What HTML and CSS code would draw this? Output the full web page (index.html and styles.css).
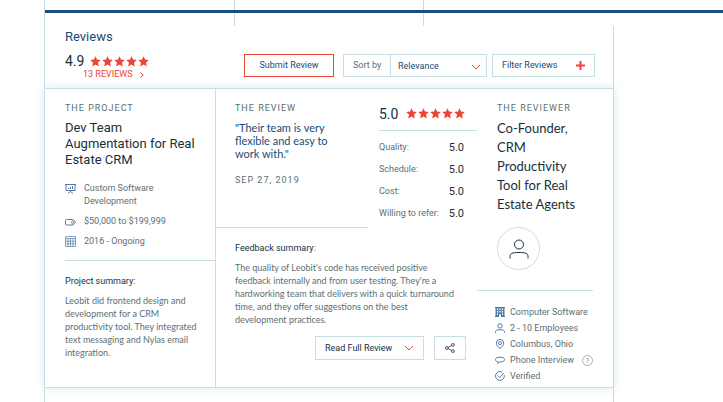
FILE: index.html
```html
<!DOCTYPE html>
<html lang="en">
<head>
  <meta charset="UTF-8" />
  <meta name="viewport" content="width=device-width, initial-scale=1.0" />
  <title>Reviews</title>
  <link rel="stylesheet" href="styles.css">
</head>
<body>
  <svg class="sprite" aria-hidden="true">
    <symbol id="star" viewBox="0 0 11 11">
      <path d="M5.5 0.3 L7 3.6 L10.8 4 L8 6.6 L8.8 10.5 L5.5 8.5 L2.2 10.5 L3 6.6 L0.2 4 L4 3.6 Z" />
    </symbol>
    <symbol id="chevron" viewBox="0 0 10 6">
      <path d="M1 1 L5 5 L9 1" />
    </symbol>
    <symbol id="person" viewBox="0 0 20 20">
      <circle cx="10" cy="5.5" r="4.5" />
      <path d="M1 19.5 V17.5 C1 14.5 3 13.5 10 13.5 S19 14.5 19 17.5 V19.5" />
    </symbol>
  </svg>

  <div class="tabs">
    <div class="tab"></div>
    <div class="tab"></div>
    <div class="tab"></div>
  </div>

  <main class="reviews">
    <header class="reviews-header">
      <div class="summary">
        <h2>Reviews</h2>
        <div class="rating">
          <span class="score">4.9</span>
          <span class="stars">
            <svg><use href="#star" /></svg><svg><use href="#star" /></svg><svg><use href="#star" /></svg><svg><use href="#star" /></svg><svg><use href="#star" /></svg>
          </span>
        </div>
        <a class="review-count" href="#reviews">13 REVIEWS
          <svg viewBox="0 0 4 6"><path d="M0.5 0.5 L3.2 3 L0.5 5.5" /></svg>
        </a>
      </div>
      <div class="controls">
        <button type="button" class="button submit">Submit Review</button>
        <div class="sort">
          <label for="sort">Sort by</label>
          <div class="select">
            <select id="sort">
              <option>Relevance</option>
              <option>Newest</option>
            </select>
            <svg class="chevron"><use href="#chevron" /></svg>
          </div>
        </div>
        <button type="button" class="button filter">Filter Reviews
          <svg viewBox="0 0 9 9"><path d="M4.5 0 V9 M0 4.5 H9" /></svg>
        </button>
      </div>
    </header>

    <article class="card" id="reviews">
      <section class="project">
        <h3 class="eyebrow">THE PROJECT</h3>
        <p class="project-title">Dev Team Augmentation for Real Estate CRM</p>
        <ul class="project-facts">
          <li>
            <svg class="icon" viewBox="0 0 11 11">
              <path d="M0 1.5 H11 M1 1.5 V7.5 H10 V1.5 M3.5 6 V5 M5.5 6 V4 M7.5 6 V3 M5.5 7.5 V9 M3 10.5 L5.5 8.5 L8 10.5" />
            </svg>
            Custom Software Development
          </li>
          <li>
            <svg class="icon" viewBox="0 0 11 11">
              <path d="M7.5 3.5 H1.5 Q0.5 3.5 0.5 4.5 V8 Q0.5 9 1.5 9 H8 L10.5 6.3 L8 3.5 Z" />
              <path d="M7.5 5 L9 6.3 L7.5 7.5 L6.2 6.3 Z" />
            </svg>
            $50,000 to $199,999
          </li>
          <li>
            <svg class="icon thin" viewBox="0 0 11 11">
              <path d="M0.5 0.5 H10.5 V10.5 H0.5 Z M0.5 2.5 H10.5 M0.5 5.2 H10.5 M0.5 7.8 H10.5 M3 2.5 V10.5 M5.5 2.5 V10.5 M8 2.5 V10.5" />
            </svg>
            2016 - Ongoing
          </li>
        </ul>
        <div class="project-summary">
          <h4>Project summary:</h4>
          <p>Leobit did frontend design and development for a CRM productivity tool. They integrated text messaging and Nylas email integration.</p>
        </div>
      </section>

      <section class="review">
        <div class="review-top">
          <div class="quote">
            <h3 class="eyebrow">THE REVIEW</h3>
            <blockquote>"Their team is very flexible and easy to work with."</blockquote>
            <time class="eyebrow date" datetime="2019-09-27">SEP 27, 2019</time>
          </div>
          <div class="scores">
            <div class="rating">
              <span class="score">5.0</span>
              <span class="stars">
                <svg><use href="#star" /></svg><svg><use href="#star" /></svg><svg><use href="#star" /></svg><svg><use href="#star" /></svg><svg><use href="#star" /></svg>
              </span>
            </div>
            <dl>
              <div><dt>Quality:</dt><dd>5.0</dd></div>
              <div><dt>Schedule:</dt><dd>5.0</dd></div>
              <div><dt>Cost:</dt><dd>5.0</dd></div>
              <div><dt>Willing to refer:</dt><dd>5.0</dd></div>
            </dl>
          </div>
        </div>
        <div class="feedback">
          <h4>Feedback summary:</h4>
          <p>The quality of Leobit's code has received positive feedback internally and from user testing. They're a hardworking team that delivers with a quick turnaround time, and they offer suggestions on the best development practices.</p>
          <div class="actions">
            <button type="button" class="button read">Read Full Review
              <svg class="chevron"><use href="#chevron" /></svg>
            </button>
            <button type="button" class="button share" aria-label="Share">
              <svg viewBox="0 0 10 10">
                <circle cx="1.9" cy="5" r="1.4" />
                <circle cx="7.9" cy="1.9" r="1.4" />
                <circle cx="7.9" cy="8.1" r="1.4" />
                <path d="M3.1 4.4 L6.7 2.5 M3.1 5.6 L6.7 7.5" />
              </svg>
            </button>
          </div>
        </div>
      </section>

      <section class="reviewer">
        <h3 class="eyebrow">THE REVIEWER</h3>
        <p class="reviewer-title">Co-Founder, CRM Productivity Tool for Real Estate Agents</p>
        <div class="avatar"><svg><use href="#person" /></svg></div>
        <ul class="reviewer-facts">
          <li>
            <svg class="icon" viewBox="0 0 10 10">
              <path class="solid" fill-rule="evenodd" d="M0 0 H10 V1 H9.5 V9 H10 V10 H6 V7.5 H4 V10 H0 V9 H0.5 V1 H0 Z M2 1.6 V3 H3.3 V1.6 Z M4.4 1.6 V3 H5.6 V1.6 Z M6.7 1.6 V3 H8 V1.6 Z M2 4 V5.4 H3.3 V4 Z M4.4 4 V5.4 H5.6 V4 Z M6.7 4 V5.4 H8 V4 Z M2 6.4 V8 H3 V6.4 Z M7 6.4 V8 H8 V6.4 Z" />
            </svg>
            Computer Software
          </li>
          <li>
            <svg class="icon" viewBox="0 0 10 10">
              <circle cx="5" cy="2.9" r="2.2" />
              <path d="M0.5 9.8 V8.6 C0.5 7.3 2 6.8 5 6.8 S9.5 7.3 9.5 8.6 V9.8" />
            </svg>
            2 - 10 Employees
          </li>
          <li>
            <svg class="icon" viewBox="0 0 10 10">
              <path d="M5 9.5 C2.6 7.6 1.3 6 1.3 4.1 A3.7 3.7 0 0 1 8.7 4.1 C8.7 6 7.4 7.6 5 9.5 Z" />
              <circle cx="5" cy="4.2" r="1.5" />
            </svg>
            Columbus, Ohio
          </li>
          <li>
            <svg class="icon" viewBox="0 0 10 10">
              <path d="M4.5 7 L2.8 8.5 V6.8 C1.2 6.5 0.5 5.7 0.5 4.6 C0.5 3 2 2.2 5 2.2 S9.5 3 9.5 4.6 S8 7 4.5 7 Z" />
            </svg>
            Phone Interview
            <button type="button" class="help">?</button>
          </li>
          <li>
            <svg class="icon" viewBox="0 0 10 10">
              <path d="M9.2 4 A4.4 4.4 0 1 1 7 1.1 M3 4.8 L4.7 6.5 L9 1.8" />
            </svg>
            Verified
          </li>
        </ul>
      </section>
    </article>
  </main>
</body>
</html>
```

FILE: styles.css
```css
* {
  box-sizing: border-box;
}

body {
  margin: 0;
  min-height: 100vh;
  display: flex;
  flex-direction: column;
  font-family: Roboto, Arial, sans-serif;
  font-size: 9px;
  line-height: 13px;
  color: #5c6f73;
  background-color: #ffffff;
}

h2, h3, h4, p, ul, dl, dd, blockquote {
  margin: 0;
  padding: 0;
  font-weight: 400;
}

ul {
  list-style: none;
}

svg {
  display: block;
  flex: none;
  fill: none;
}

button, select {
  font: inherit;
  cursor: pointer;
}

.sprite {
  position: absolute;
  width: 0;
  height: 0;
}

/* tab strip above the panel */
.tabs {
  position: relative;
  display: grid;
  grid-template-columns: repeat(3, 1fr);
  height: 26px;
  padding: 0 110px 0 44px;
}

.tab {
  border-left: 1px solid #c5dfe4;
}

.tabs::after {
  content: "";
  position: absolute;
  top: 10px;
  left: 45px;
  right: 0;
  height: 3px;
  background-color: #184f7c;
}

.reviews {
  flex: 1;
  margin: 0 109px 0 44px;
  border: solid #c5dfe4;
  border-width: 0 1px;
}

.reviews-header {
  display: flex;
  justify-content: space-between;
  align-items: flex-end;
  padding: 2px 18px 0 20px;
  height: 62px;
}

.summary {
  padding-bottom: 8px;
}

h2 {
  font-size: 13px;
  line-height: 16px;
  margin-bottom: 8px;
  color: #1b4a76;
}

.rating {
  display: flex;
  align-items: center;
  gap: 6px;
}

.score {
  font-size: 14px;
  line-height: 16px;
  color: #17313b;
}

.stars {
  display: flex;
  gap: 1px;
}

.stars svg {
  width: 11px;
  height: 11px;
  fill: #ef4335;
}

.review-count {
  display: flex;
  align-items: center;
  gap: 7px;
  margin-left: 18px;
  line-height: 11px;
  color: #ef4335;
  text-decoration: none;
}

.review-count svg {
  width: 4px;
  height: 6px;
  stroke: #ef4335;
}

.controls {
  display: flex;
  padding-bottom: 11px;
}

.button {
  display: flex;
  align-items: center;
  justify-content: center;
  height: 23px;
  padding: 0 9px;
  border: 1px solid #c5dfe4;
  background: none;
  color: #1b4a76;
}

.submit {
  width: 90px;
  margin-right: 9px;
  border-color: #ef4335;
}

.sort {
  display: flex;
  align-items: center;
  width: 144px;
  height: 23px;
  margin-right: 5px;
  border: 1px solid #c5dfe4;
}

.sort label {
  width: 46px;
  padding-left: 9px;
}

.select {
  position: relative;
  flex: 1;
  height: 100%;
  border-left: 1px solid #c5dfe4;
}

.select select {
  appearance: none;
  width: 100%;
  height: 100%;
  padding: 2px 20px 0 7px;
  border: none;
  background: none;
  color: #1b4a76;
}

.chevron {
  width: 10px;
  height: 6px;
  stroke: #ef4335;
}

.select .chevron {
  position: absolute;
  top: 9px;
  right: 5px;
  pointer-events: none;
}

.filter {
  width: 103px;
  justify-content: space-between;
}

.filter svg {
  width: 9px;
  height: 9px;
  stroke: #ef4335;
  stroke-width: 2;
}

/* review card */
.card {
  display: grid;
  grid-template-columns: 171px 1fr 136px;
  margin: 0 -1px;
  border: 1px solid #c5dfe4;
  box-shadow: 0 0 8px rgba(150, 200, 212, 0.4);
}

.eyebrow {
  font-size: 9px;
  letter-spacing: 1px;
}

.icon {
  width: 11px;
  height: 11px;
  margin-top: 1px;
  stroke: #557ba3;
}

.thin {
  stroke-width: 0.7;
}

h4 {
  margin-bottom: 6px;
  font-size: 9px;
  color: #17313b;
}

.project {
  padding: 13px 0 27px 20px;
  border-right: 1px solid #c5dfe4;
}

.project-title {
  margin: 5px 10px 14px 0;
  font-size: 13px;
  line-height: 16px;
  color: #17313b;
}

.project-facts {
  display: flex;
  flex-direction: column;
  gap: 7px;
  padding-bottom: 12px;
  border-bottom: 1px solid #c5dfe4;
}

.project-facts li {
  display: flex;
  gap: 8px;
  padding-right: 30px;
}

.project-summary {
  padding: 14px 10px 0 0;
}

.project-summary p,
.feedback p {
  font-family: Lato, sans-serif;
  font-size: 9px;
}

.feedback p {
  padding-right: 10px;
}

.review-top {
  display: flex;
  gap: 11px;
}

.quote {
  flex: 1;
  height: 139px;
  padding: 13px 20px 0 19px;
  border-bottom: 1px solid #c5dfe4;
}

blockquote {
  margin: 6px 0 14px;
  font-family: Lato, sans-serif;
  font-size: 11px;
  color: #1b4a76;
}

.date {
  display: block;
}

.scores {
  width: 98px;
}

.scores .rating {
  height: 42px;
  gap: 8px;
  padding-top: 8px;
  border-bottom: 1px solid #c5dfe4;
}

.scores dl {
  padding-top: 5px;
}

.scores dl div {
  display: flex;
  justify-content: space-between;
  align-items: center;
  height: 22px;
  padding-right: 13px;
}

.scores dd {
  font-size: 11px;
  color: #17313b;
}

.feedback {
  padding: 14px 11px 0 19px;
}

.actions {
  display: flex;
  justify-content: flex-end;
  gap: 10px;
  margin-top: 10px;
}

.actions .button {
  height: 24px;
  color: #17313b;
}

.read {
  width: 109px;
  justify-content: space-between;
}

.share {
  width: 32px;
}

.share svg {
  width: 10px;
  height: 10px;
  stroke: #17313b;
  stroke-width: 0.8;
}

.reviewer {
  padding: 13px 20px 3px 0;
}

.reviewer .eyebrow,
.reviewer-title,
.avatar {
  margin-left: 20px;
}

.reviewer-title {
  margin-top: 4px;
  padding-right: 8px;
  font-family: Lato, sans-serif;
  font-size: 13px;
  line-height: 19px;
  color: #17313b;
}

.avatar {
  display: flex;
  align-items: center;
  justify-content: center;
  width: 43px;
  height: 43px;
  margin-top: 13px;
  border: 1px solid #c5dfe4;
  border-radius: 50%;
}

.avatar svg {
  width: 20px;
  height: 20px;
  stroke: #17313b;
}

.reviewer-facts {
  margin-top: 20px;
  padding: 13px 0 0 18px;
  border-top: 1px solid #c5dfe4;
}

.reviewer-facts li {
  display: flex;
  align-items: center;
  gap: 5px;
  height: 16px;
  white-space: nowrap;
}

.reviewer-facts .icon {
  width: 10px;
  height: 10px;
  margin-top: 0;
}

.icon .solid {
  fill: #557ba3;
  stroke: none;
}

.help {
  width: 11px;
  height: 11px;
  margin-left: auto;
  padding: 0;
  border: 1px solid #a9b4b5;
  border-radius: 50%;
  background: none;
  font-size: 8px;
  line-height: 9px;
  color: #8b9899;
}
```
